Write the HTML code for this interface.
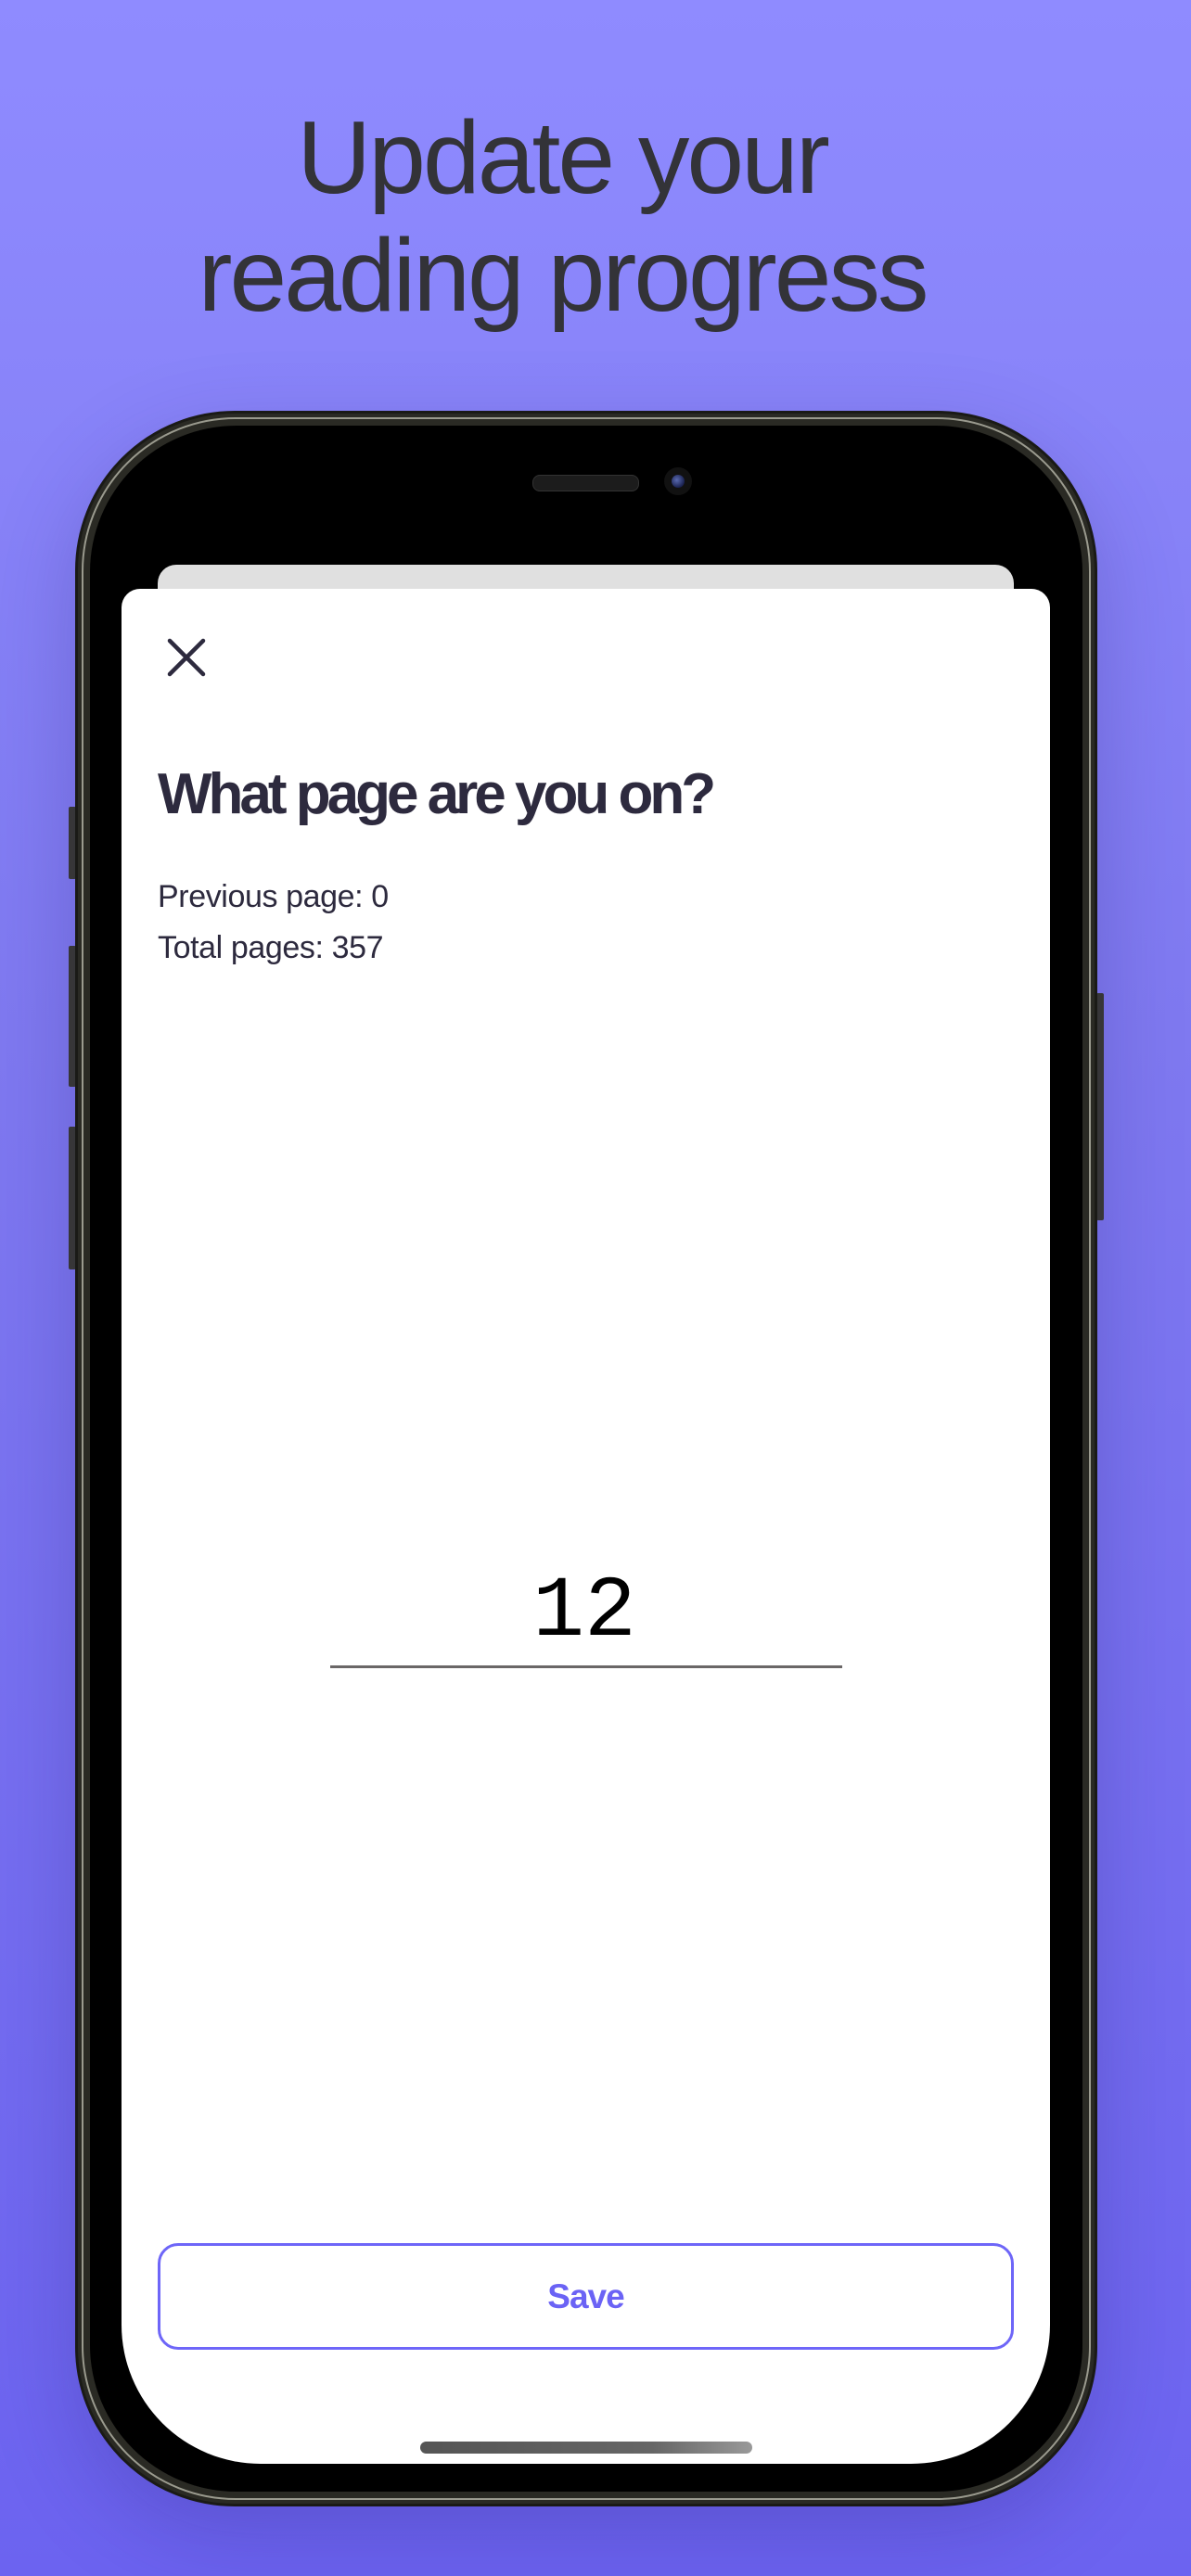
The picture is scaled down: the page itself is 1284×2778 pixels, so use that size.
<!DOCTYPE html>
<html><head><meta charset="utf-8"><style>
html,body{margin:0;padding:0}
body{width:1284px;height:2778px;position:relative;overflow:hidden;background:linear-gradient(180deg,#8f8bff 0%,#7f79f0 40%,#6c63f0 100%);font-family:"Liberation Sans",sans-serif}
.abs{position:absolute}
.title{left:-36px;width:1284px;text-align:center;color:#333338;font-size:111px;line-height:127px;letter-spacing:-3px;top:107px}
.frame{left:81px;top:443px;width:1102px;height:2260px;border-radius:172px;background:#2a2a24;box-sizing:border-box;border:3px solid #1a1a16;box-shadow:0 30px 90px rgba(40,30,120,0.25)}
.frame2{left:88px;top:450px;width:1088px;height:2246px;border-radius:166px;border:2px solid #9a9a8e;box-sizing:border-box}
.screen{left:97px;top:459px;width:1070px;height:2228px;border-radius:158px;background:#000}
.btn{background:#3a3a30;border-radius:2px}
.gray{left:170px;top:609px;width:923px;height:60px;border-radius:20px 20px 0 0;background:#e0e0e0}
.white{left:131px;top:635px;width:1001px;height:2022px;background:#fff;border-radius:20px 20px 150px 150px}
.h1{left:170px;top:826px;font-size:62px;line-height:62px;font-weight:bold;color:#2d2a3e;letter-spacing:-4px;white-space:nowrap}
.p{left:170px;font-size:34px;line-height:34px;color:#2d2a3e;letter-spacing:-0.4px;white-space:nowrap}
.num{left:-12px;width:1284px;text-align:center;top:1692px;font-family:"Liberation Mono",monospace;font-size:93px;line-height:93px;color:#000}
.line{left:356px;top:1796px;width:552px;height:3px;background:#6a6767}
.save{left:170px;top:2419px;width:923px;height:115px;box-sizing:border-box;border:3px solid #6e66f8;border-radius:22px;text-align:center;line-height:109px;font-size:37px;font-weight:bold;color:#6b63f5;letter-spacing:-1px}
.home{left:453px;top:2633px;width:358px;height:13px;border-radius:7px;background:linear-gradient(90deg,#555,#666 70%,#999)}
</style></head><body>
<div class="abs title">Update your<br>reading progress</div>
<div class="abs btn" style="left:74px;top:870px;width:8px;height:78px"></div>
<div class="abs btn" style="left:74px;top:1020px;width:8px;height:152px"></div>
<div class="abs btn" style="left:74px;top:1215px;width:8px;height:154px"></div>
<div class="abs btn" style="left:1182px;top:1071px;width:8px;height:245px"></div>
<div class="abs frame"></div>
<div class="abs frame2"></div>
<div class="abs screen"></div>
<div class="abs" style="left:574px;top:512px;width:113px;height:16px;border-radius:8px;background:#1c1c1c;border:1px solid #333"></div>
<div class="abs" style="left:716px;top:504px;width:30px;height:30px;border-radius:50%;background:#111"></div>
<div class="abs" style="left:724px;top:512px;width:14px;height:14px;border-radius:50%;background:radial-gradient(circle at 40% 40%,#5a6ab0,#1a2250 70%)"></div>
<div class="abs gray"></div>
<div class="abs white"></div>
<svg class="abs" style="left:175px;top:683px" width="52" height="52" viewBox="0 0 52 52"><path d="M8 8 L44 44 M44 8 L8 44" stroke="#2d2a3e" stroke-width="4.5" stroke-linecap="round"/></svg>
<div class="abs h1">What page are you on?</div>
<div class="abs p" style="top:950px">Previous page: 0</div>
<div class="abs p" style="top:1005px">Total pages: 357</div>
<div class="abs num">12</div>
<div class="abs line"></div>
<div class="abs save">Save</div>
<div class="abs home"></div>
</body></html>
